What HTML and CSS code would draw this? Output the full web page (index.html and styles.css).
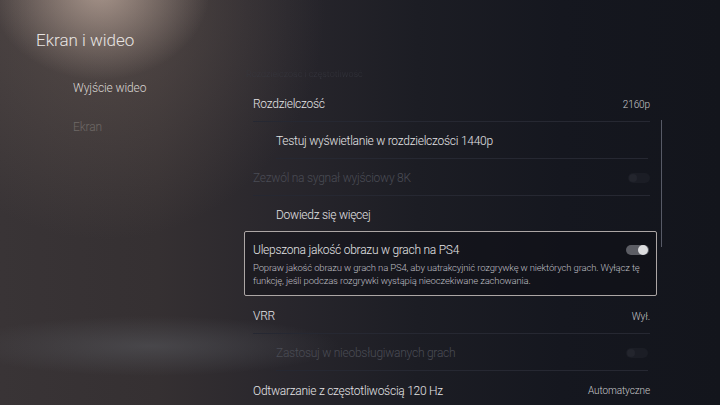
FILE: index.html
```html
<!DOCTYPE html>
<html lang="pl">
<head>
    <meta charset="UTF-8">
    <meta name="viewport" content="width=device-width, initial-scale=1.0">
    <title>Ekran i wideo</title>
    <link rel="stylesheet" href="styles.css">
</head>
<body>
    <div class="screen">
        <aside class="sidebar">
            <h1>Ekran i wideo</h1>
            <ul class="menu">
                <li class="active">Wyjście wideo</li>
                <li>Ekran</li>
            </ul>
        </aside>

        <main class="settings">
            <div class="section-title">Rozdzielczość i częstotliwość</div>

            <div class="row">
                <span>Rozdzielczość</span>
                <span class="value">2160p</span>
            </div>
            <div class="row sub">
                <span>Testuj wyświetlanie w rozdzielczości 1440p</span>
            </div>
            <div class="row disabled">
                <span>Zezwól na sygnał wyjściowy 8K</span>
                <span class="toggle"></span>
            </div>
            <div class="row sub before-card">
                <span>Dowiedz się więcej</span>
            </div>

            <!-- focused item -->
            <div class="card">
                <div class="card-head">
                    <span>Ulepszona jakość obrazu w grach na PS4</span>
                    <span class="toggle on"></span>
                </div>
                <p>Popraw jakość obrazu w grach na PS4, aby uatrakcyjnić rozgrywkę w niektórych grach. Wyłącz tę funkcję, jeśli podczas rozgrywki wystąpią nieoczekiwane zachowania.</p>
            </div>

            <div class="row">
                <span>VRR</span>
                <span class="value">Wył.</span>
            </div>
            <div class="row sub disabled">
                <span>Zastosuj w nieobsługiwanych grach</span>
                <span class="toggle"></span>
            </div>
            <div class="row last">
                <span>Odtwarzanie z częstotliwością 120 Hz</span>
                <span class="value">Automatyczne</span>
            </div>

            <div class="scrollbar"></div>
        </main>
    </div>
</body>
</html>
```

FILE: styles.css
```css
html, body {
    margin: 0;
    padding: 0;
    height: 100%;
}
body {
    font-family: Roboto, "Liberation Sans", sans-serif;
    font-weight: 300;
    color: #e4e4e6;
    overflow: hidden;
}
.screen {
    display: flex;
    width: 720px;
    height: 405px;
    overflow: hidden;
    background:
        radial-gradient(ellipse 110px 90px at 100px -10px, rgba(200, 178, 165, 0.7), rgba(200, 178, 165, 0) 100%),
        radial-gradient(ellipse 220px 230px at 105px 10px, rgba(120, 104, 96, 0.45), rgba(120, 104, 96, 0) 100%),
        radial-gradient(ellipse 190px 30px at 150px 346px, rgba(95, 98, 104, 0.45), rgba(95, 98, 104, 0) 100%),
        linear-gradient(90deg, #393436 0%, #353032 22%, #28262c 40%, #1c1d24 58%, #15171f 78%, #13151c 100%);
}

/* left column */
.sidebar {
    width: 244px;
    flex-shrink: 0;
    padding: 29px 0 0 36px;
    box-sizing: border-box;
}
.sidebar h1 {
    margin: 0;
    font-size: 17px;
    font-weight: 300;
    line-height: 22px;
    color: #e8e4e2;
}
.menu {
    list-style: none;
    margin: 29px 0 0;
    padding: 0 0 0 37px;
}
.menu li {
    font-size: 12px;
    line-height: 16px;
    margin-bottom: 23px;
    color: #6f6966;
    letter-spacing: -0.1px;
}
.menu li.active {
    color: #d9d5d2;
}

/* right column */
.settings {
    position: relative;
    width: 414px;
    padding-top: 68px;
}
.section-title {
    font-size: 9px;
    line-height: 12px;
    height: 12px;
    padding-left: 2px;
    color: #383941;
    margin-bottom: 5px;
    -webkit-mask-image: linear-gradient(180deg, rgba(0,0,0,0.2) 0%, #000 90%);
}
.row {
    display: flex;
    align-items: center;
    justify-content: space-between;
    box-sizing: border-box;
    height: 37px;
    padding-top: 2px;
    margin: 0 8px 0 9px;
    border-bottom: 1px solid #262832;
    font-size: 12px;
    letter-spacing: -0.25px;
}
.row.sub {
    margin-left: 32px;
    margin-right: 10px;
}
.row.before-card {
    border-bottom: none;
    height: 35px;
}
.row.last {
    border-bottom: none;
}
.row.disabled {
    color: #4a4c55;
}
.value {
    font-size: 10px;
    letter-spacing: -0.1px;
    color: #c9c9cc;
}

.toggle {
    position: relative;
    width: 22px;
    height: 10px;
    border-radius: 5px;
    background: #1b1d25;
}
.toggle::after {
    content: "";
    position: absolute;
    left: 1px;
    top: 1px;
    width: 8px;
    height: 8px;
    border-radius: 50%;
    background: #23252d;
}
.toggle.on {
    width: 23px;
    background: #5c5d64;
}
.toggle.on::after {
    left: auto;
    right: 1px;
    top: 0;
    width: 10px;
    height: 10px;
    background: #dcdcde;
}

.card {
    margin: 0 1px 1px 0;
    padding: 10px 7px 8px 8px;
    border: 1px solid #aca6a5;
    border-radius: 2px;
    background: rgba(14, 14, 19, 0.45);
}
.card-head {
    display: flex;
    align-items: center;
    justify-content: space-between;
    font-size: 12px;
    line-height: 16px;
    letter-spacing: -0.25px;
}
.card p {
    margin: 3px 0 0;
    font-size: 9.5px;
    line-height: 13px;
    letter-spacing: -0.15px;
    color: #bdbdc1;
}

.scrollbar {
    position: absolute;
    left: 417px;
    top: 120px;
    width: 1px;
    height: 127px;
    background: #575a66;
}
```
